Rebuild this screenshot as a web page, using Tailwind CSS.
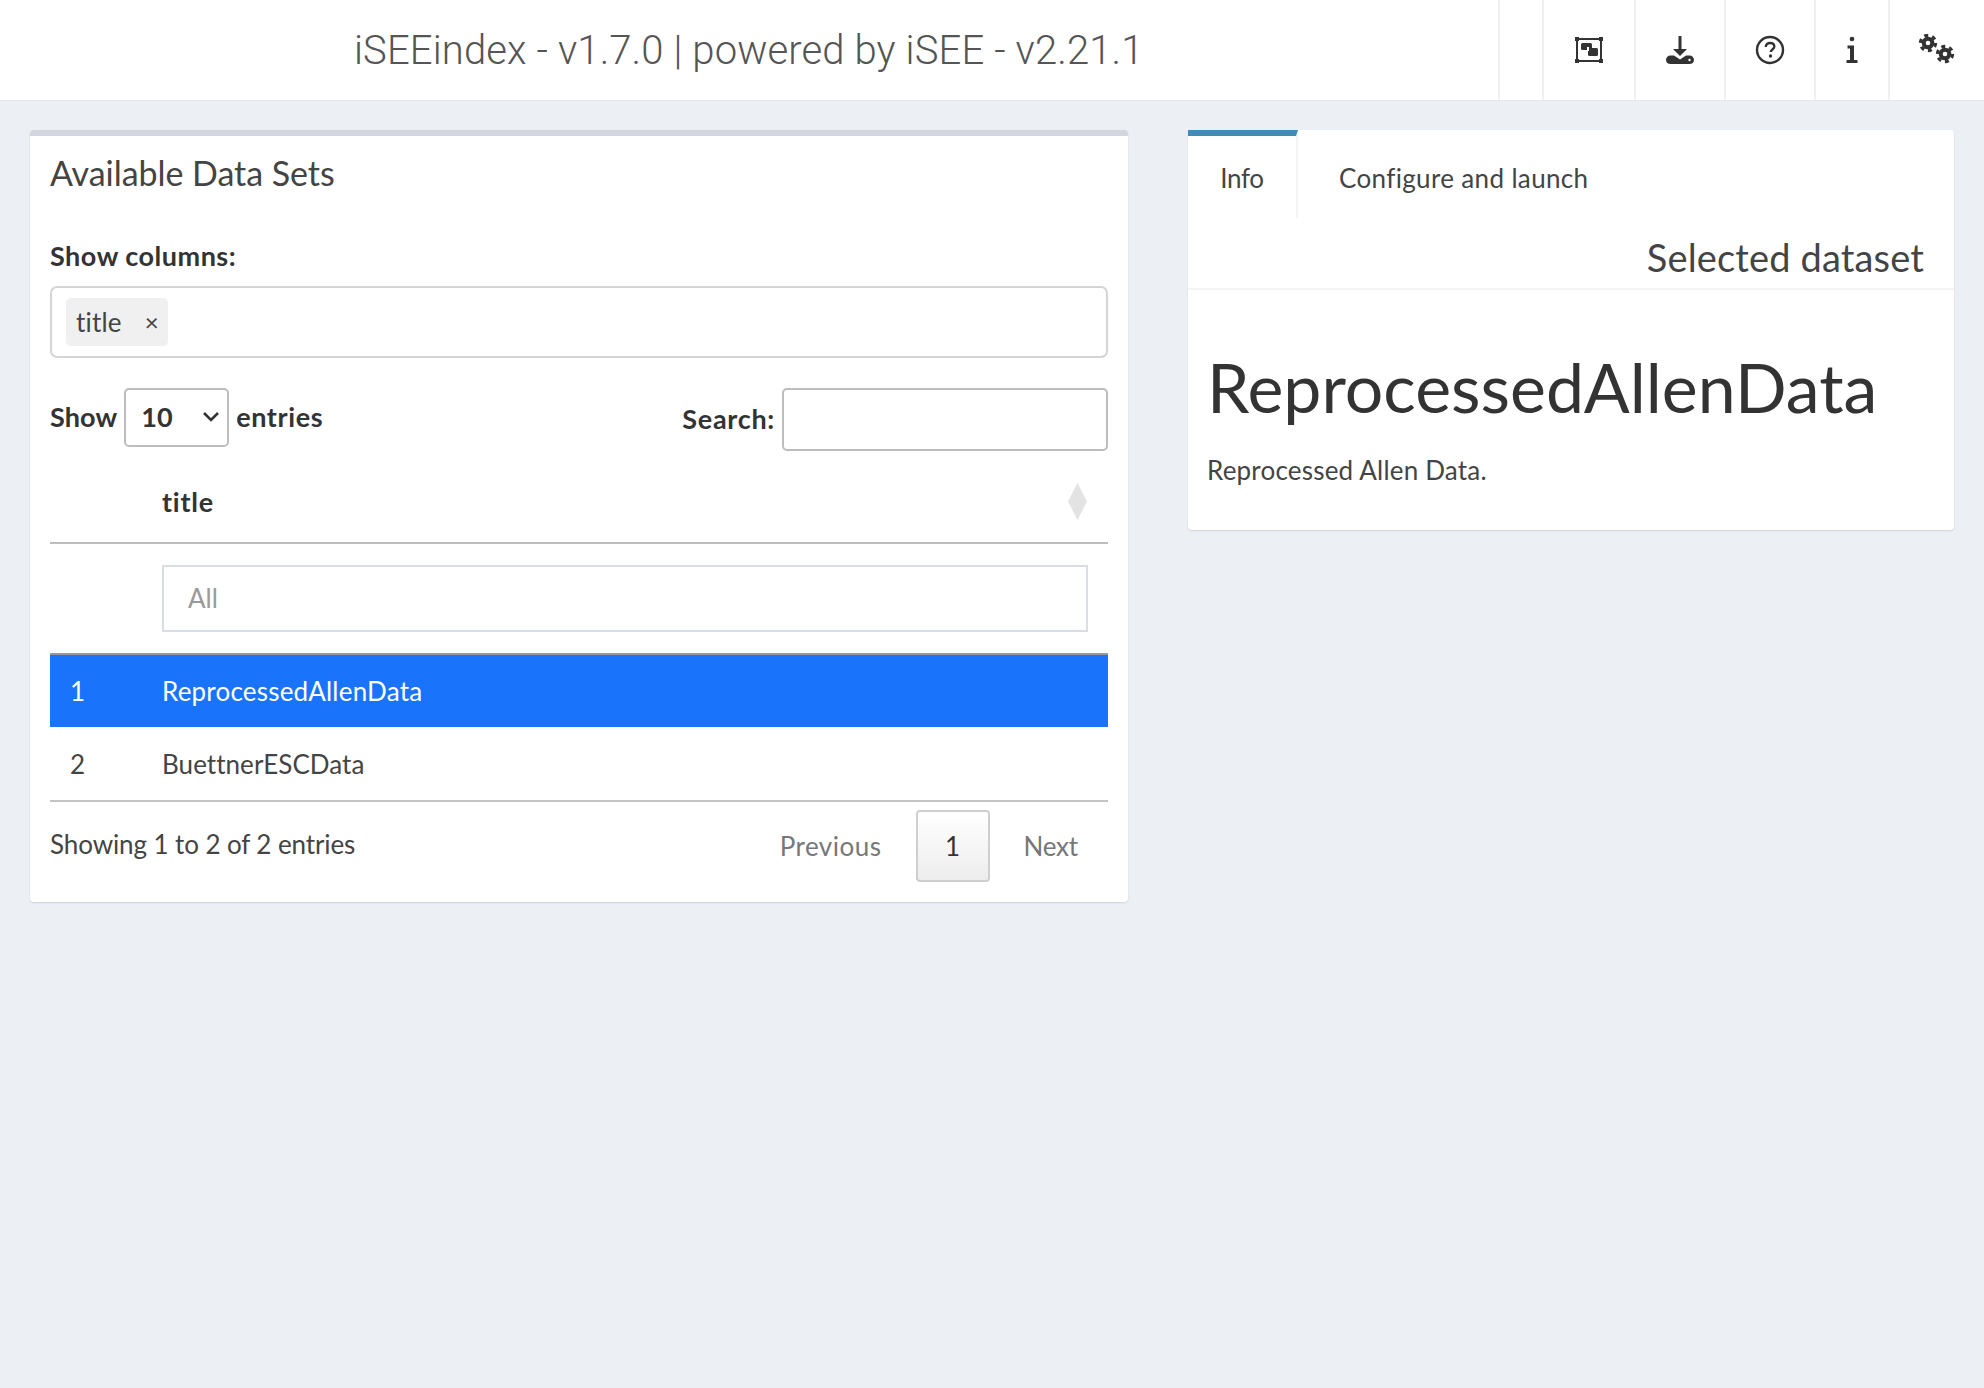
<!DOCTYPE html>
<html lang="en">
<head>
<meta charset="utf-8">
<title>iSEEindex</title>
<script src="https://cdn.jsdelivr.net/npm/@tailwindcss/browser@4"></script>
</head>
<body class="m-0 min-h-[1388px] bg-[#ecf0f5] font-['Lato','Noto_Sans',sans-serif] text-[26px] text-[#444]">
<header class="flex h-[101px] items-stretch border-b border-[#e3e6ea] bg-white">
  <div class="flex-1 pl-[354px] pt-[28px] font-['Roboto','Liberation_Sans',sans-serif] text-[40px] leading-[46px] font-light tracking-[0.12px] text-[#555]">iSEEindex - v1.7.0 | powered by iSEE - v2.21.1</div>
  <nav class="flex">
    <div class="w-[44px] border-l-2 border-[#f0f0f0]"></div>
    <div class="flex w-[92px] items-center justify-center border-l-2 border-[#f0f0f0]">
      <svg width="28" height="26" viewBox="0 0 28 26" fill="#333"><path d="M2 2h24v22H2z" fill="none" stroke="#333" stroke-width="2"/><path d="M0 0h4v4H0zM24 0h4v4h-4zM0 22h4v4H0zM24 22h4v4h-4z"/><rect x="6" y="6" width="11" height="7" rx="1.500"/><rect x="13" y="11" width="10" height="8" rx="1.500"/><rect x="12" y="10" width="2" height="4" fill="#fff"/></svg>
    </div>
    <div class="flex w-[90px] items-center justify-center border-l-2 border-[#f0f0f0]">
      <svg width="30" height="30" viewBox="0 0 30 30" fill="#333"><path d="M13.500 1h3v13h5.500l-7 7-7-7h5.500z"/><path d="M1 25c0-2.500 2-4.500 4.500-4.500H9l6 4 6-4h3.500c2.500 0 4.500 2 4.500 4.500s-2 4-4.500 4h-19C3 29 1 27.500 1 25z"/><circle cx="24.500" cy="25" r="1.200" fill="#fff"/></svg>
    </div>
    <div class="flex w-[90px] items-center justify-center border-l-2 border-[#f0f0f0]">
      <svg width="30" height="30" viewBox="0 0 30 30"><circle cx="15" cy="15" r="13" fill="none" stroke="#333" stroke-width="2.4"/><path d="M10.800 12c0-2.600 1.900-4 4.300-4s4.200 1.400 4.200 3.600c0 2.800-3.500 3-3.500 5.400" fill="none" stroke="#333" stroke-width="2.400"/><circle cx="15.500" cy="21" r="1.700" fill="#333"/></svg>
    </div>
    <div class="flex w-[74px] items-center justify-center border-l-2 border-[#f0f0f0]">
      <svg width="14" height="28" viewBox="0 0 14 28" fill="#333"><circle cx="7" cy="3" r="2.300"/><path d="M2.500 9.500H9V24h3.500v3H1.500v-3H5V12.500H2.500z"/></svg>
    </div>
    <div class="flex w-[96px] items-start justify-center border-l-2 border-[#f0f0f0] pt-[34px]">
      <svg width="38" height="30" viewBox="0 0 38 30" fill="none" stroke="#333"><circle cx="10" cy="9" r="4.300" stroke-width="4"/><circle cx="10" cy="9" r="7.600" stroke-width="3.200" stroke-dasharray="4 3.960"/><circle cx="27" cy="20" r="4.300" stroke-width="4"/><circle cx="27" cy="20" r="7.600" stroke-width="3.200" stroke-dasharray="4 3.960"/></svg>
    </div>
  </nav>
</header>

<main class="flex items-start justify-between px-[30px] pt-[29px]">
  <section class="h-[772px] w-[1098px] rounded-[4px] border-t-[6px] border-[#d2d6de] bg-white px-[20px] shadow-[0_1px_2px_rgba(0,0,0,0.12)]">
    <h3 class="flex h-[72px] items-center text-[34px] tracking-[-0.05px] text-[#444]">Available Data Sets</h3>
    <label class="mt-[33px] block h-[30px] text-[27px] leading-[30px] font-bold tracking-[0.5px] text-[#333]">Show columns:</label>
    <div class="mt-[15px] flex h-[72px] items-center rounded-[7px] border-2 border-[#d4d4d4] px-[14px]">
      <span class="flex h-[48px] w-[102px] items-center rounded-[5px] bg-[#f0f0f0] pl-[10px] text-[26px] tracking-[0.2px]">title<span class="ml-[23px] text-[24px] leading-none">×</span></span>
    </div>
    <div class="mt-[30px] flex h-[63px] items-start justify-between text-[27px]">
      <div class="flex h-[59px] items-center font-bold tracking-[0.1px] text-[#333]">
        <span>Show</span>
        <div class="relative ml-[7px] h-[59px] w-[105px] rounded-[5px] border-2 border-[#bdbdbd]">
          <select class="h-full w-full appearance-none bg-transparent pl-[15px] font-bold text-[#333] outline-none"><option>10</option></select>
          <svg class="absolute top-[21px] right-[7px]" width="18" height="12" viewBox="0 0 18 12" fill="none" stroke="#333" stroke-width="2.600"><path d="M2 2l7 7 7-7"/></svg>
        </div>
        <span class="ml-[7px] tracking-[0.6px]">entries</span>
      </div>
      <div class="flex h-[63px] items-center font-bold tracking-[0.7px] text-[#333]">
        <span>Search:</span>
        <input type="text" aria-label="Search" class="ml-[7px] h-[63px] w-[326px] rounded-[5px] border-2 border-[#bdbdbd] bg-white outline-none">
      </div>
    </div>
    <table class="w-full table-fixed border-collapse">
      <thead>
        <tr class="h-[92px] border-b-2 border-[#bdbdbd]">
          <th class="w-[112px]"></th>
          <th class="relative pt-[12px] pl-0 text-left text-[27px] font-bold tracking-[0.8px] text-[#333]">title
            <svg class="absolute top-[32px] right-[21px]" width="19" height="37" viewBox="0 0 19 37" fill="#e3e3e3"><path d="M9.500 0L19 18.500 9.500 37 0 18.500z"/></svg>
          </th>
        </tr>
        <tr class="h-[111px]">
          <th></th>
          <th class="pr-[20px] font-normal"><input type="text" placeholder="All" class="h-[67px] w-full border-2 border-[#dadde5] pb-[2px] pl-[24px] text-[26px] font-normal placeholder:text-[#999] outline-none"></th>
        </tr>
      </thead>
      <tbody>
        <tr class="h-[73px] border-t-2 border-[#999] bg-[#1a73fb] text-white">
          <td class="pl-[20px]">1</td><td class="tracking-[0.2px]">ReprocessedAllenData</td>
        </tr>
        <tr class="h-[74px] border-b-2 border-[#c4c4c4]">
          <td class="pt-[2px] pl-[20px]">2</td><td class="pt-[2px] tracking-[0.05px]">BuettnerESCData</td>
        </tr>
      </tbody>
    </table>
    <div class="flex items-start justify-between">
      <div class="pt-[24px] leading-[36px] tracking-[-0.1px]">Showing 1 to 2 of 2 entries</div>
      <div class="mt-[8px] flex items-center">
        <span class="tracking-[0.5px] text-[#777]">Previous</span>
        <span class="ml-[34px] flex h-[72px] w-[74px] items-center justify-center rounded-[4px] border-2 border-[#cfcfcf] bg-gradient-to-b from-white to-[#ededed] text-[#333]">1</span>
        <span class="mr-[30px] ml-[34px] tracking-[-0.2px] text-[#777]">Next</span>
      </div>
    </div>
  </section>

  <section class="h-[400px] w-[766px] rounded-[4px] bg-white shadow-[0_1px_2px_rgba(0,0,0,0.12)]">
    <div class="flex h-[88px] items-start">
      <div class="flex h-[88px] w-[110px] items-center justify-center border-t-[6px] border-r-2 border-t-[#3c8dbc] border-r-[#f4f4f4] pt-[2px] tracking-[-0.3px]">Info</div>
      <div class="ml-[41px] flex h-[88px] items-center pt-[8px] tracking-[0.35px]">Configure and launch</div>
    </div>
    <h3 class="flex h-[72px] items-center justify-end border-b-2 border-[#f4f4f4] pt-[9px] pr-[30px] text-[38px] tracking-[0.15px]">Selected dataset</h3>
    <h1 class="mt-[57px] pl-[19px] text-[68px] leading-[80px] text-[#333]">ReprocessedAllenData</h1>
    <p class="mt-[25px] pl-[19px] leading-[36px] tracking-[0.2px]">Reprocessed Allen Data.</p>
  </section>
</main>
</body>
</html>
